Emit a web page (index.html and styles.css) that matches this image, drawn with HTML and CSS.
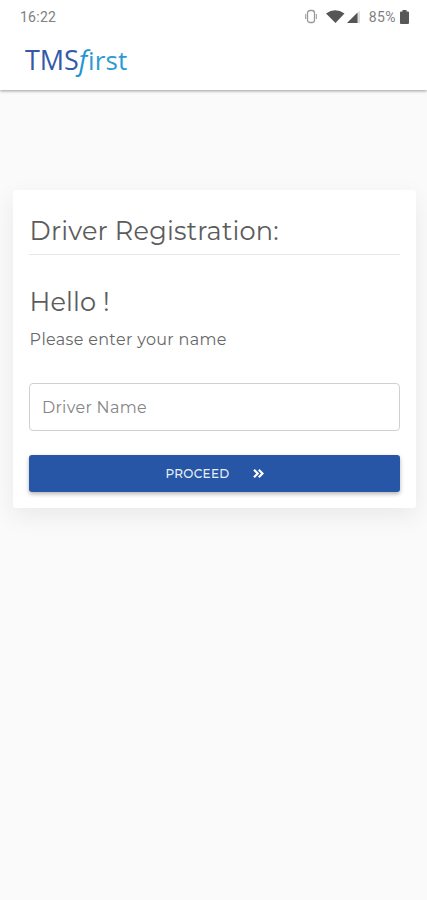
FILE: index.html
```html
<!DOCTYPE html>
<html lang="en">
<head>
<meta charset="utf-8">
<title>TMSfirst – Driver Registration</title>
<link rel="stylesheet" href="styles.css">
</head>
<body>
<header class="header">
  <div class="status">
    <span class="time">16:22</span>
    <svg class="status-icons" width="56" height="16" viewBox="0 0 56 16" aria-hidden="true">
      <rect x="2.500" y="1.500" width="7" height="12" rx="2.500" fill="none" stroke="#999" stroke-width="1.3"/>
      <path d="M.6 5v5M11.400 5v5" stroke="#aaa" stroke-width="1.2"/>
      <path d="M21 4.500Q30 -2 39.500 4.500L30.500 14Z" fill="#555"/>
      <path d="M42 14L55 1.500V14Z" fill="#ddd"/>
      <path d="M42 14L52.500 3.500V14Z" fill="#555"/>
    </svg>
    <span class="percent">85%</span>
    <svg class="battery" width="9" height="14" viewBox="0 0 9 14" aria-hidden="true">
      <path d="M2.500 0h4v1.500H8q1 0 1 1V13q0 1-1 1H1q-1 0-1-1V2.500q0-1 1-1h1.500Z" fill="#585858"/>
    </svg>
  </div>
  <div class="logo"><span class="logo-tms">TMS</span><span class="logo-f">f</span><span class="logo-irst">irst</span></div>
</header>
<main class="card">
  <h1 class="title">Driver Registration:</h1>
  <h2 class="hello">Hello !</h2>
  <p class="prompt">Please enter your name</p>
  <input class="field" type="text" placeholder="Driver Name" aria-label="Driver Name">
  <button class="proceed" type="button">
    <span>PROCEED</span>
    <svg width="11" height="9" viewBox="0 0 11 9" fill="none" stroke="#fff" stroke-width="2.200" aria-hidden="true">
      <path d="M1 .8L4.700 4.500L1 8.200M5.800 .8L9.500 4.500L5.800 8.200"/>
    </svg>
  </button>
</main>
</body>
</html>
```

FILE: styles.css
```css
* { box-sizing: border-box; }
body {
  margin: 0;
  min-height: 900px;
  background: #fafafa;
  color: #5c5c5c;
  font-family: Montserrat, Inter, sans-serif;
}
.header {
  height: 90px;
  background: #fff;
  box-shadow: 0 1px 3px rgba(0, 0, 0, .38);
}
.status {
  display: flex;
  align-items: center;
  height: 34px;
  padding: 0 18px 0 20px;
  color: #808080;
  font: 14px/34px Roboto, sans-serif;
}
.time { letter-spacing: .25px; }
.status-icons { margin-left: auto; }
.percent { margin: 0 4px 0 8px; letter-spacing: .4px; }
.logo {
  display: flex;
  padding-left: 25px;
  font: 27px/52px "Open Sans", sans-serif;
  white-space: nowrap;
}
.logo-tms { color: #3459a9; letter-spacing: -.1px; }
.logo-f { color: #2196d3; font-style: italic; margin-right: 1px; }
.logo-irst { color: #2c9bd3; font-size: 26px; letter-spacing: .1px; }
.card {
  display: flex;
  flex-direction: column;
  margin: 100px 11px 0 13px;
  height: 318px;
  padding: 18px 16px 16px;
  background: #fff;
  border-radius: 3px;
  box-shadow: 0 8px 24px rgba(0, 0, 0, .07);
}
.title, .hello, .prompt { margin: 0; white-space: nowrap; }
.title {
  height: 47px;
  border-bottom: 1px solid #e8e8e8;
  padding-left: .6px;
  font-size: 25.6px;
  font-weight: 400;
  line-height: 46px;
  letter-spacing: .18px;
}
.hello {
  margin-top: 30px;
  padding-left: .6px;
  font-size: 25.6px;
  font-weight: 400;
  line-height: 34px;
  letter-spacing: .1px;
}
.prompt {
  margin-top: 9px;
  padding-left: .6px;
  color: #686868;
  font-size: 16px;
  line-height: 24px;
  letter-spacing: .33px;
}
.field {
  width: 100%;
  height: 48px;
  margin-top: 31px;
  padding: 1px 12px 0;
  border: 1px solid #d0d0d0;
  border-radius: 4px;
  background: #fff;
  font: 16px Montserrat, Inter, sans-serif;
  letter-spacing: .3px;
}
.field::placeholder { color: #858585; opacity: 1; }
.proceed {
  display: flex;
  align-items: center;
  justify-content: center;
  gap: 23px;
  height: 37px;
  margin-top: 24px;
  padding: 0;
  border: 0;
  border-radius: 3px;
  background: #2656a5;
  box-shadow: 0 2px 4px rgba(0, 0, 0, .3);
  color: #e6edf8;
  font: 500 12px Montserrat, Inter, sans-serif;
  letter-spacing: .3px;
}
```
